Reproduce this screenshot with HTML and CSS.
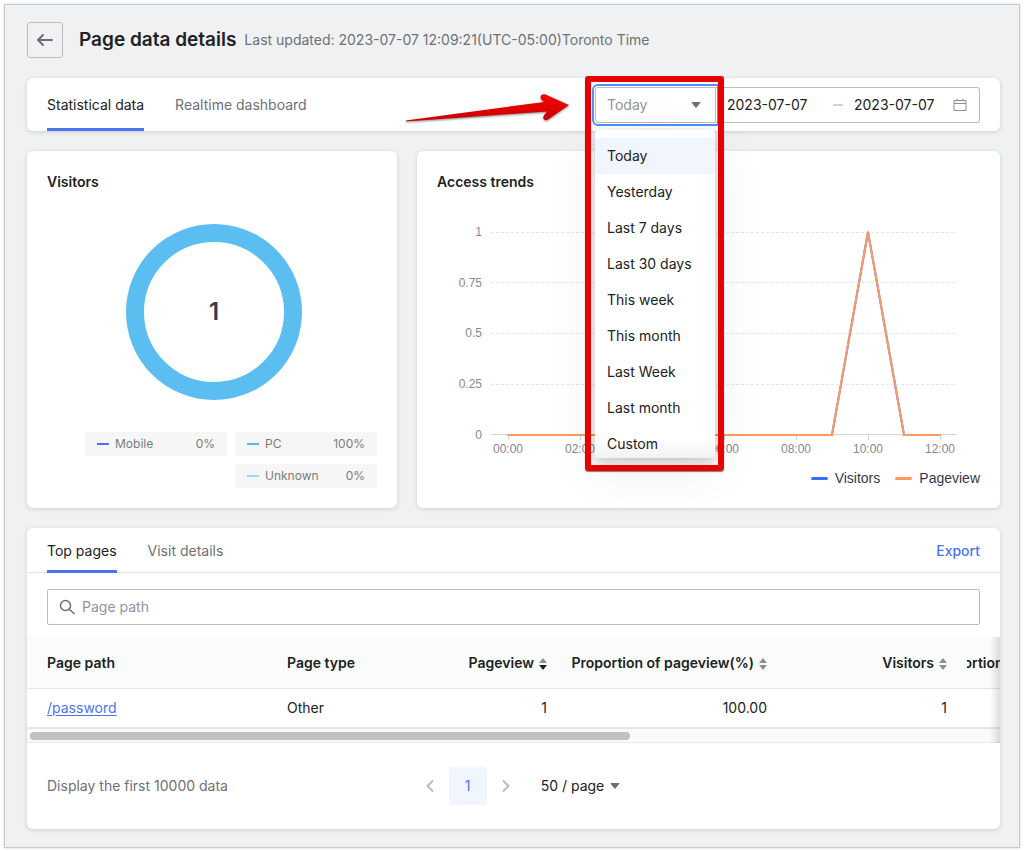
FILE: index.html
```html
<!DOCTYPE html>
<html lang="en">
<head>
<meta charset="utf-8">
<meta name="viewport" content="width=device-width, initial-scale=1">
<title>Page data details</title>
<link rel="stylesheet" href="styles.css">
</head>
<body>
<main class="page">
  <header class="page-header">
    <button class="back" type="button" aria-label="Back">
      <svg width="18" height="18" viewBox="0 0 18 18" fill="none" stroke="#6b6f73" stroke-width="2" stroke-linecap="round" stroke-linejoin="round"><path d="M16 9H2M7 4L2 9l5 5"/></svg>
    </button>
    <h1 class="page-title">Page data details</h1>
    <span class="updated">Last updated: 2023-07-07 12:09:21(UTC-05:00)Toronto Time</span>
  </header>

  <section class="card filter-bar">
    <nav class="tabs">
      <button class="tab active" type="button">Statistical data</button>
      <button class="tab" type="button">Realtime dashboard</button>
    </nav>
    <div class="filters">
      <div class="range-picker">
        <select class="range-select" aria-label="Date range">
          <option>Today</option><option>Yesterday</option><option>Last 7 days</option><option>Last 30 days</option><option>This week</option><option>This month</option><option>Last Week</option><option>Last month</option><option>Custom</option>
        </select>
        <svg class="caret select-caret" width="10" height="6" viewBox="0 0 10 6"><path d="M1 .5h8L5 5.5z" fill="#6b6f73" stroke="#6b6f73" stroke-linejoin="round"/></svg>
        <div class="menu">
          <button class="option selected" type="button">Today</button>
          <button class="option" type="button">Yesterday</button>
          <button class="option" type="button">Last 7 days</button>
          <button class="option" type="button">Last 30 days</button>
          <button class="option" type="button">This week</button>
          <button class="option" type="button">This month</button>
          <button class="option" type="button">Last Week</button>
          <button class="option" type="button">Last month</button>
          <button class="option" type="button">Custom</button>
        </div>
        <div class="highlight"></div>
        <svg class="arrow" width="166" height="32" viewBox="0 0 166 32">
          <defs><linearGradient id="red" x1="0" y1="0" x2="0" y2="1"><stop offset="0" stop-color="#f30505"/><stop offset="1" stop-color="#c90000"/></linearGradient></defs>
          <path d="M1 27.500L139 9L136.500 6.500C134 3 137 .5 140.500 1.500L164 12L143 26.500C139.500 28.500 137 25 139 22.500L142 18.500L1 28.500z" fill="url(#red)"/>
        </svg>
      </div>
      <div class="dates">
        <input class="date start" type="text" value="2023-07-07" aria-label="Start date">
        <span class="dash"></span>
        <input class="date" type="text" value="2023-07-07" aria-label="End date">
        <svg class="calendar" width="14" height="14" viewBox="0 0 14 14" fill="none" stroke="#8b9095"><path d="M1 2.500h12v10H1zM1 5.500h12M4 .5v3M10 .5v3"/></svg>
      </div>
    </div>
  </section>

  <div class="charts">
    <section class="card visitors">
      <h2 class="card-title">Visitors</h2>
      <div class="donut-area"><div class="donut">1</div></div>
      <ul class="shares">
        <li class="share"><i class="key mobile"></i>Mobile<span class="percent">0%</span></li>
        <li class="share"><i class="key pc"></i>PC<span class="percent">100%</span></li>
        <li class="share"><i class="key unknown"></i>Unknown<span class="percent">0%</span></li>
      </ul>
    </section>

    <section class="card trends">
      <h2 class="card-title">Access trends</h2>
      <svg class="trend-chart" viewBox="0 0 543 260" role="img" aria-label="Access trends">
        <g stroke="#e2e4ea" stroke-dasharray="3 2"><path d="M54 29.500H520M54 79.500H520M54 130.500H520M54 181.500H520"/></g>
        <path d="M54 231.500H520M71.500 232v5M143.500 232v5M215.500 232v5M287.500 232v5M359.500 232v5M431.500 232v5M503.500 232v5" stroke="#d3d5d9" fill="none"/>
        <path d="M71 232H395L431 29L467 232H503" fill="none" stroke="#3a6cff" stroke-width="2"/>
        <path d="M71 232H395L431 29L467 232H503" fill="none" stroke="#ff995f" stroke-width="2" stroke-linejoin="round" stroke-linecap="round"/>
        <g class="axis" text-anchor="end"><text x="45" y="33">1</text><text x="45" y="84">0.75</text><text x="45" y="134">0.5</text><text x="45" y="185">0.25</text><text x="45" y="236">0</text></g>
        <g class="axis" text-anchor="middle"><text x="71" y="250">00:00</text><text x="143" y="250">02:00</text><text x="287" y="250">06:00</text><text x="359" y="250">08:00</text><text x="431" y="250">10:00</text><text x="503" y="250">12:00</text></g>
      </svg>
      <div class="legend">
        <span class="series"><i class="swatch blue"></i>Visitors</span>
        <span class="series"><i class="swatch orange"></i>Pageview</span>
      </div>
    </section>
  </div>

  <section class="card pages">
    <div class="pages-head">
      <nav class="tabs">
        <button class="tab active" type="button">Top pages</button>
        <button class="tab" type="button">Visit details</button>
      </nav>
      <button class="export" type="button">Export</button>
    </div>
    <label class="search">
      <svg width="16" height="16" viewBox="0 0 16 16" fill="none" stroke="#6b6f73" stroke-width="1.500" stroke-linecap="round"><circle cx="6.500" cy="6.500" r="5"/><path d="M10.200 10.200L15 14.500"/></svg>
      <input class="search-input" type="text" placeholder="Page path" aria-label="Page path">
    </label>
    <div class="table-wrap">
      <table class="table">
        <colgroup><col class="col-path"><col class="col-type"><col class="col-views"><col class="col-share"><col class="col-visitors"><col></colgroup>
        <thead>
          <tr>
            <th>Page path</th>
            <th>Page type</th>
            <th class="num">Pageview<svg class="sort" width="8" height="12" viewBox="0 0 8 12"><path d="M0 5l4-5 4 5z" fill="#8b9095"/><path d="M0 7l4 5 4-5z" fill="#202223"/></svg></th>
            <th class="num">Proportion of pageview(%)<svg class="sort" width="8" height="12" viewBox="0 0 8 12"><path d="M0 5l4-5 4 5zM0 7l4 5 4-5z" fill="#8b9095"/></svg></th>
            <th class="num">Visitors<svg class="sort" width="8" height="12" viewBox="0 0 8 12"><path d="M0 5l4-5 4 5zM0 7l4 5 4-5z" fill="#8b9095"/></svg></th>
            <th class="clipped">Proportion</th>
          </tr>
        </thead>
        <tbody>
          <tr>
            <td><a class="link" href="#">/password</a></td>
            <td>Other</td>
            <td class="num">1</td>
            <td class="num">100.00</td>
            <td class="num">1</td>
            <td></td>
          </tr>
        </tbody>
      </table>
      <div class="scroll-track"><div class="scroll-thumb"></div></div>
    </div>
    <footer class="footer">
      <span class="note">Display the first 10000 data</span>
      <div class="pager">
        <button class="step" type="button" aria-label="Previous page"><svg width="8" height="12" viewBox="0 0 8 12" fill="none" stroke="#b9bcbf" stroke-width="2"><path d="M7 .5L1.500 6L7 11.500"/></svg></button>
        <button class="page-number" type="button">1</button>
        <button class="step" type="button" aria-label="Next page"><svg width="8" height="12" viewBox="0 0 8 12" fill="none" stroke="#b9bcbf" stroke-width="2"><path d="M1 .5L6.500 6L1 11.500"/></svg></button>
        <button class="page-size" type="button">50 / page<svg class="caret" width="10" height="6" viewBox="0 0 10 6"><path d="M1 .5h8L5 5.500z" fill="#6b6f73" stroke="#6b6f73" stroke-linejoin="round"/></svg></button>
      </div>
    </footer>
  </section>
</main>
</body>
</html>
```
FILE: styles.css
```css
* { box-sizing: border-box; }

body {
  margin: 0;
  padding: 4px;
  background: #fff;
  color: #202223;
  font: 14px/20px Inter, "Liberation Sans", sans-serif;
}

button, input, select {
  margin: 0;
  padding: 0;
  border: 0;
  background: none;
  color: inherit;
  font: inherit;
}

button { cursor: pointer; }

.page {
  display: flex;
  flex-direction: column;
  gap: 20px;
  padding: 17px 19px 18px 22px;
  border: 1px solid #c9cbcc;
  background: #f0f1f3;
  box-shadow: 0 0 2px rgba(0, 0, 0, .2);
}

.page-header { display: flex; align-items: center; }

.back {
  display: flex;
  align-items: center;
  justify-content: center;
  width: 36px;
  height: 36px;
  border: 1px solid #babec3;
  border-radius: 3px;
}

.page-title {
  margin: 0 8px 0 16px;
  font-size: 19px;
  line-height: 28px;
  font-weight: 600;
}

.updated { color: #6d7175; }

.card {
  border-radius: 6px;
  background: #fff;
  box-shadow: 0 1px 4px rgba(23, 24, 24, .16);
}

.filter-bar {
  display: flex;
  justify-content: space-between;
  padding: 0 20px;
  height: 53px;
}

.tabs { display: flex; gap: 31px; }

.tab {
  padding-top: 3px;
  border-bottom: 3px solid transparent;
  color: #6d7175;
}

.tab.active {
  border-color: #4a73f0;
  color: #202223;
}

.filters { display: flex; align-items: center; padding-top: 1px; }

.range-picker { position: relative; z-index: 2; }

.range-select {
  display: block;
  width: 121px;
  height: 36px;
  padding: 0 11px;
  border: 1px solid #babec3;
  border-radius: 3px 0 0 3px;
  outline: 2px solid #4d90fe;
  outline-offset: 1px;
  appearance: none;
  background: #fff;
  color: #919599;
}

.select-caret { position: absolute; right: 15px; top: 15px; }

.menu {
  position: absolute;
  top: 43px;
  left: 0;
  width: 120px;
  height: 328px;
  padding-top: 8px;
  overflow: hidden;
  border-radius: 4px;
  background: linear-gradient(#fff 308px, #f2f2f2);
  box-shadow: 0 4px 12px rgba(0, 0, 0, .2), 0 12px 50px rgba(0, 0, 0, .08);
}

.option {
  display: block;
  width: 100%;
  height: 36px;
  padding: 0 12px;
  text-align: left;
}

.option.selected { background: #f0f5fe; }

.highlight {
  position: absolute;
  top: -11px;
  left: -10px;
  width: 139px;
  height: 395px;
  border: 6px solid #e60202;
  border-radius: 3px;
  box-shadow: 0 1px 1px rgba(0, 0, 0, .5);
  pointer-events: none;
}

.arrow {
  position: absolute;
  top: 6px;
  right: 145px;
  filter: drop-shadow(0 1px 1px rgba(0, 0, 0, .5));
  pointer-events: none;
}

.dates {
  display: flex;
  align-items: center;
  width: 264px;
  height: 36px;
  padding: 0 12px 0 11px;
  border: 1px solid #babec3;
  border-left: 0;
  border-radius: 0 3px 3px 0;
}

.date { flex: 1; min-width: 0; }
.date.start { flex: none; width: 106px; }

.dash {
  width: 10px;
  height: 2px;
  margin-right: 11px;
  background: #d0d2d4;
}

.calendar { flex: none; }

.charts {
  display: grid;
  grid-template-columns: 370fr 583fr;
  gap: 20px;
}

.visitors { padding: 20px; }

.card-title {
  margin: 0;
  font-size: 14px;
  line-height: 22px;
  font-weight: 600;
}

.donut-area {
  display: flex;
  justify-content: center;
  padding: 31px 0 32px 4px;
}

.donut {
  display: flex;
  align-items: center;
  justify-content: center;
  width: 176px;
  height: 176px;
  border: 18px solid #5cbdf0;
  border-radius: 50%;
  color: #333c4d;
  font-size: 24px;
  font-weight: 600;
}

.shares {
  display: flex;
  flex-wrap: wrap;
  justify-content: flex-end;
  gap: 8px;
  margin: 0;
  padding: 0;
  list-style: none;
}

.share {
  display: flex;
  align-items: center;
  width: 142px;
  height: 24px;
  padding: 0 12px;
  border-radius: 2px;
  background: #f6f6f6;
  color: #7a7d80;
  font-size: 12px;
}

.key { width: 12px; height: 2px; margin-right: 6px; }
.key.mobile { background: #4a73f0; }
.key.pc { background: #53b9ee; }
.key.unknown { background: #9fdaf6; }
.percent { margin-left: auto; }

.trends { padding: 20px 20px 15px; }

.trend-chart { display: block; width: 100%; margin-top: 10px; }

.axis {
  fill: #85888c;
  font: 12px "Liberation Sans", Arial, sans-serif;
}

.legend {
  display: flex;
  justify-content: flex-end;
  gap: 15px;
  color: #333850;
  font: 14px/30px "Liberation Sans", Arial, sans-serif;
}

.series { display: flex; align-items: center; gap: 7px; }
.swatch { width: 17px; height: 3px; border-radius: 2px; }
.swatch.blue { background: #3a6cff; }
.swatch.orange { background: #ff995f; }

.pages { overflow: hidden; }

.pages-head {
  display: flex;
  justify-content: space-between;
  height: 45px;
  padding: 0 20px;
  box-shadow: inset 0 -1px #e1e3e5;
}

.export { color: #4a73f0; font-weight: 500; }

.search {
  display: flex;
  align-items: center;
  gap: 7px;
  height: 36px;
  margin: 16px 20px 12px;
  padding: 0 11px;
  border: 1px solid #babec3;
  border-radius: 2px;
}

.search-input { flex: 1; outline: 0; }
.search-input::placeholder { color: #919599; opacity: 1; }

.table-wrap { position: relative; overflow: hidden; }

.table-wrap::after {
  content: "";
  position: absolute;
  inset: 0 0 0 auto;
  width: 10px;
  background: linear-gradient(to right, rgba(0, 0, 0, 0), rgba(0, 0, 0, .13));
}

.table {
  width: 100%;
  border-collapse: separate;
  border-spacing: 0;
  table-layout: fixed;
}

.col-path { width: 240px; }
.col-type { width: 180px; }
.col-views { width: 120px; }
.col-share { width: 220px; }
.col-visitors { width: 180px; }

.table th, .table td {
  padding: 0 0 0 20px;
  border-bottom: 1px solid #e1e3e5;
  text-align: left;
  white-space: nowrap;
}

.table th { height: 52px; background: #fafcfb; font-weight: 600; }
.table td { height: 40px; border-bottom: 2px solid #e5e6e7; }
.table .num { padding: 0 20px 0 0; text-align: right; }
.table .clipped { padding: 0; overflow: hidden; text-indent: -35px; }

.sort { margin-left: 5px; vertical-align: -2px; }
.link { color: #4a73f0; text-underline-offset: 2px; }

.scroll-track {
  height: 14px;
  padding: 3px;
  border-bottom: 1px solid #e8e8e8;
  background: #fafafa;
}

.scroll-thumb {
  width: 62%;
  height: 8px;
  border-radius: 4px;
  background: #c1c1c1;
}

.footer {
  display: grid;
  grid-template-columns: 1fr auto 1fr;
  align-items: center;
  padding: 24px 20px;
}

.note { color: #6d7175; }
.pager { display: flex; align-items: center; padding-left: 4px; }
.step { display: flex; align-items: center; justify-content: center; width: 38px; height: 38px; }

.page-number {
  width: 38px;
  height: 38px;
  border-radius: 3px;
  background: #f0f5fe;
  color: #3f7be0;
}

.page-size {
  display: flex;
  align-items: center;
  gap: 6px;
  margin-left: 16px;
}
```
